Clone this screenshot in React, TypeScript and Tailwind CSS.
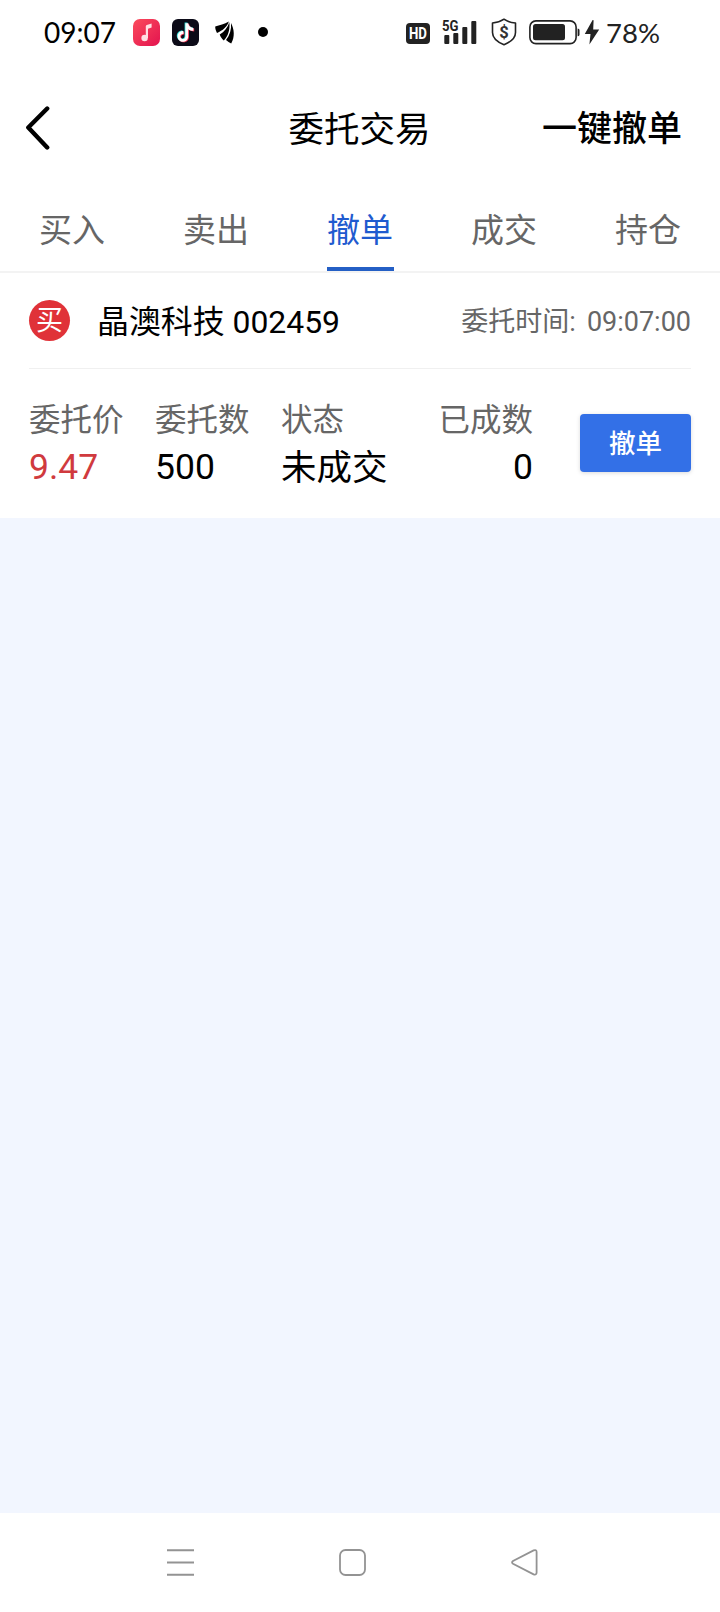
import React, { useState } from 'react';

const tabs = ['买入', '卖出', '撤单', '成交', '持仓'];

const order = {
  side: '买',
  name: '晶澳科技',
  code: '002459',
  time: '09:07:00',
  price: '9.47',
  amount: '500',
  status: '未成交',
  filled: '0',
};

const MusicIcon = () => (
  <svg width="27" height="27" viewBox="0 0 27 27">
    <defs>
      <linearGradient id="music" x1="0" y1="0" x2="1" y2="1">
        <stop offset="0" stopColor="#fb4b5c" />
        <stop offset="1" stopColor="#e3134f" />
      </linearGradient>
    </defs>
    <rect width="27" height="27" rx="7" fill="url(#music)" />
    <circle cx="11.6" cy="19" r="3.2" fill="#ffdfe3" />
    <path d="M12.8 19V7.2Q12.8 6.2 13.8 5.9L18.6 4.4V8.6L15 9.8V19Z" fill="#ffdfe3" />
  </svg>
);

const NOTE = 'M13.4 4.2H16.2C16.5 6.8 18.4 8.6 21.4 8.9V11.8C19.4 11.8 17.6 11.2 16.2 10.2V17.2C16.2 20.6 13.9 22.7 11.1 22.7C8 22.7 5.6 20.3 5.6 17.4C5.6 14.1 8.4 11.8 11.4 12.1V14.9C9.7 14.7 8.3 15.9 8.3 17.4C8.3 18.9 9.6 20 11.1 20C12.6 20 13.4 18.8 13.4 17.3Z';

const TikTokIcon = () => (
  <svg width="27" height="27" viewBox="0 0 27 27">
    <rect width="27" height="27" rx="6" fill="#0c0b18" />
    <path d={NOTE} fill="#35e0dc" transform="translate(-0.8 -0.6)" />
    <path d={NOTE} fill="#f5304f" transform="translate(0.8 0.6)" />
    <path d={NOTE} fill="#fff" />
  </svg>
);

const WingIcon = () => (
  <svg width="20" height="23" viewBox="0 0 20 23">
    <path d="M.2 5.6C4.5 4.2 9.500 3.400 13.800 .6C12.200 6 7.800 9.600 2 12C.8 10 .2 7.800 .2 5.600Z" />
    <path d="M14.300 1.200C15.200 8.200 13.200 15 8.800 19.600C7 18 5.500 16 4.700 13.600C9.400 10.600 12.800 6.600 14.300 1.200Z" />
    <path d="M16 2C19.400 8.200 20 16 16.200 22.600C14.400 21.800 12.600 20.600 11 19C14.800 14 16.600 8.400 16 2Z" />
  </svg>
);

const SignalIcon = () => (
  <svg className="overflow-visible" width="36" height="26" viewBox="0 0 36 26" fill="#222">
    <text x="0" y="12.3" fontSize="15.5" fontWeight="700" textLength="16.5" lengthAdjust="spacingAndGlyphs" className="font-[Roboto]">5G</text>
    <rect x="2.3" y="16" width="5" height="9" rx="1" />
    <rect x="11.3" y="14" width="5" height="11" rx="1" />
    <rect x="20.3" y="8" width="5" height="17" rx="1" />
    <rect x="29.3" y="2" width="5" height="23" rx="1" />
  </svg>
);

const ShieldIcon = () => (
  <svg width="26" height="28" viewBox="0 0 26 28">
    <path d="M13 1.2C16 3.3 20 4.7 24.5 5V14.5C24.5 20.5 18.5 24.5 13 26.8C7.5 24.5 1.5 20.5 1.5 14.5V5C6 4.7 10 3.3 13 1.2Z" fill="none" stroke="#222" strokeWidth="1.6" strokeLinejoin="round" />
    <text x="13" y="19.6" textAnchor="middle" fontSize="16.5" fontWeight="700" fill="#333" className="font-[Roboto]">$</text>
  </svg>
);

const BatteryIcon = () => (
  <svg width="51" height="25" viewBox="0 0 51 25">
    <rect x=".9" y=".9" width="46.2" height="22.7" rx="6" fill="none" stroke="#222" strokeWidth="1.6" />
    <rect x="4" y="4" width="32" height="16.2" rx="2.5" fill="#222" />
    <path d="M48.6 8.5Q50.5 8.5 50.5 10V14.8Q50.5 16.3 48.6 16.3Z" fill="#222" />
  </svg>
);

const StatusBar = () => (
  <div className="flex h-16 items-center pl-[44px] pr-[61px] font-[Lato] text-[28px] leading-[64px]">
    <span className="w-[89px] shrink-0">09:07</span>
    <MusicIcon />
    <span className="w-3" />
    <TikTokIcon />
    <span className="w-4" />
    <WingIcon />
    <span className="ml-[23px] size-[10px] rounded-full bg-black" />
    <div className="ml-auto flex items-center text-[#222]">
      <svg className="mt-[3px] overflow-visible" width="24" height="21" viewBox="0 0 24 21">
        <rect width="24" height="21" rx="4" fill="#222" />
        <text x="3" y="16.3" fontSize="16.5" fontWeight="700" textLength="18" lengthAdjust="spacingAndGlyphs" fill="#fff" className="font-[Roboto]">HD</text>
      </svg>
      <span className="ml-3"><SignalIcon /></span>
      <span className="ml-[13px]"><ShieldIcon /></span>
      <span className="ml-3"><BatteryIcon /></span>
      <svg className="ml-[4px]" width="16" height="25" viewBox="0 0 16 25" fill="#222">
        <path d="M8.6 0L.8 14H6.5L5.4 24.5L15.2 9.4H9.2L9.6 .3Z" />
      </svg>
      <span className="ml-[6px] w-[53px] pt-[2px] text-[27.5px]">78%</span>
    </div>
  </div>
);

const Header = () => (
  <header className="grid h-[130px] grid-cols-3 items-center pl-[25px] pr-[38px] text-[35.5px]">
    <button aria-label="返回" className="justify-self-start pb-[3px]">
      <svg width="25" height="44" viewBox="0 0 25 44" fill="none" stroke="#000" strokeWidth="4.4" strokeLinecap="round" strokeLinejoin="round">
        <path d="M22.2 2.5L3.3 21.5L22.2 41.5" />
      </svg>
    </button>
    <h1 className="ml-[-1px] justify-self-center whitespace-nowrap pl-[13px] pt-1">委托交易</h1>
    <button className="justify-self-end whitespace-nowrap pt-[3px] text-[35px] font-medium">一键撤单</button>
  </header>
);

const Field = ({ label, value, className = '', valueClassName = '' }: {
  label: string;
  value: string;
  className?: string;
  valueClassName?: string;
}) => (
  <div className={`flex flex-col ${className}`}>
    <span className="text-[31.5px] leading-[46px] text-[#666]">{label}</span>
    <span className={`text-[35.5px] ${valueClassName || 'leading-[46px]'}`}>{value}</span>
  </div>
);

const OrderCard = () => (
  <section className="h-[245px] bg-white px-[29px]">
    <div className="flex h-24 items-center border-b border-[#f0f0f0]">
      <span className="flex size-[41px] items-center justify-center rounded-full bg-[#e03238] pt-[2px] text-[27px] leading-none text-white">
        {order.side}
      </span>
      <span className="ml-[27px] pt-1 text-[31.9px]">
        {order.name} {order.code}
      </span>
      <span className="ml-auto flex gap-[11px] pt-1 text-[27px] text-[#666]">
        <span>委托时间:</span>
        <span>{order.time}</span>
      </span>
    </div>
    <div className="flex pt-[29px]">
      <Field label="委托价" value={order.price} className="w-[126px]" valueClassName="leading-[46px] text-[#d03a3e]" />
      <Field label="委托数" value={order.amount} className="w-[126px]" />
      <Field label="状态" value={order.status} className="w-[127px]" valueClassName="leading-[48px]" />
      <Field label="已成数" value={order.filled} className="w-[125px] items-end" />
      <button className="ml-auto mt-4 h-[58px] w-[111px] rounded-[4px] bg-[#3370e7] pt-[2px] text-[26.5px] font-medium text-white shadow-[0_1px_4px_rgba(0,0,0,0.15)]">
        撤单
      </button>
    </div>
  </section>
);

const NavBar = () => (
  <nav className="flex h-[99px] items-center bg-white pl-[167px]">
    <svg width="27" height="27" viewBox="0 0 27 27" stroke="#939393" strokeWidth="2">
      <path d="M0 1.3H27M0 13.5H27M0 25.7H27" />
    </svg>
    <svg className="ml-[145px]" width="27" height="27" viewBox="0 0 27 27" fill="none" stroke="#939393" strokeWidth="1.8">
      <rect x="1" y="1" width="25" height="25" rx="5.5" />
    </svg>
    <svg className="ml-[145px]" width="27" height="27" viewBox="0 0 27 27" fill="none" stroke="#939393" strokeWidth="1.8">
      <path d="M2 12Q.1 13.4 2 14.7L22.6 25.3Q25.6 26.3 25.6 23.5V3Q25.6 .3 22.6 1.4Z" />
    </svg>
  </nav>
);

const App = () => {
  const [activeTab, setActiveTab] = useState('撤单');

  return (
    <div className="flex h-[1612px] w-[720px] flex-col overflow-hidden bg-[#f2f6ff] font-[Roboto,'Noto_Sans_CJK_SC',sans-serif] text-black">
      <div className="bg-white">
        <StatusBar />
        <Header />
        <div className="flex h-[79px] justify-around border-b-2 border-[#f3f3f3]">
          {tabs.map((tab) => (
            <div key={tab} className="flex flex-1 justify-center">
              <button
                onClick={() => setActiveTab(tab)}
                className={`h-[77px] w-[67px] whitespace-nowrap border-b-4 text-[33px] leading-[40px] ${
                  activeTab === tab ? 'border-[#245fc5] text-[#1f5bcf]' : 'border-transparent text-[#666]'
                }`}
              >
                {tab}
              </button>
            </div>
          ))}
        </div>
      </div>
      <OrderCard />
      <main className="flex-1" />
      <NavBar />
    </div>
  );
};

export default App;
